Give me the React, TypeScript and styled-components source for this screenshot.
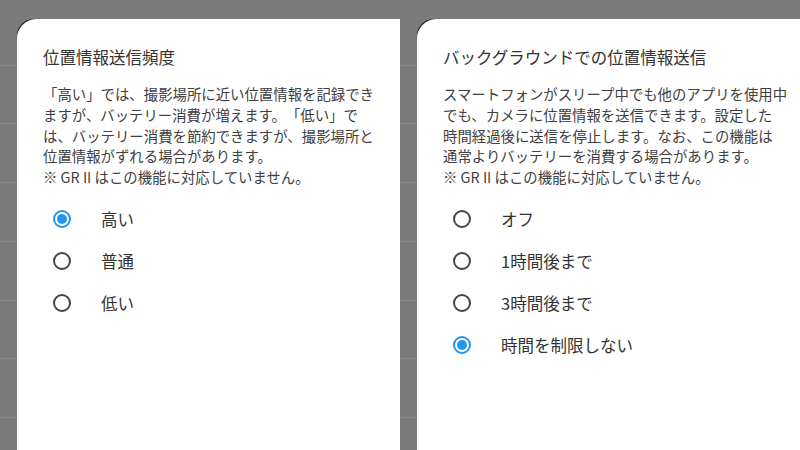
import React from 'react';
import styled, { createGlobalStyle } from 'styled-components';

interface OptionData {
  label: string;
  checked?: boolean;
}

interface DialogData {
  title: string;
  lines: string[];
  options: OptionData[];
}

const dialogs: DialogData[] = [
  {
    title: '位置情報送信頻度',
    lines: [
      '「高い」では、撮影場所に近い位置情報を記録でき',
      'ますが、バッテリー消費が増えます。「低い」で',
      'は、バッテリー消費を節約できますが、撮影場所と',
      '位置情報がずれる場合があります。',
      '※ GR II はこの機能に対応していません。'
    ],
    options: [{ label: '高い', checked: true }, { label: '普通' }, { label: '低い' }]
  },
  {
    title: 'バックグラウンドでの位置情報送信',
    lines: [
      'スマートフォンがスリープ中でも他のアプリを使用中',
      'でも、カメラに位置情報を送信できます。設定した',
      '時間経過後に送信を停止します。なお、この機能は',
      '通常よりバッテリーを消費する場合があります。',
      '※ GR II はこの機能に対応していません。'
    ],
    options: [
      { label: 'オフ' },
      { label: '1時間後まで' },
      { label: '3時間後まで' },
      { label: '時間を制限しない', checked: true }
    ]
  }
];

const GlobalStyle = createGlobalStyle`
  html, body {
    margin: 0;
    padding: 0;
    background: #7a7a7a;
  }
  body {
    font-family: "Noto Sans CJK JP", "Noto Sans", sans-serif;
    text-spacing-trim: space-all;
    font-feature-settings: "chws" 0, "halt" 0, "palt" 0;
  }
`;

const Screen = styled.div`
  display: flex;
  width: 800px;
  height: 450px;
  overflow: hidden;
`;

const Pane = styled.div`
  width: 400px;
  height: 450px;
  flex-shrink: 0;
  overflow: hidden;
  box-sizing: border-box;
  padding: 19px 0 0 17px;
  background-color: #7a7a7a;
  background-image: repeating-linear-gradient(
    to bottom,
    transparent 0 57.7px,
    #888888 57.7px 58.7px
  );
  background-position: 0 7px;
`;

const Card = styled.div`
  position: relative;
  width: 420px;
  height: 460px;
  box-sizing: border-box;
  padding: 26px 26px 0;
  background: #ffffff;
  border-radius: 20px 20px 0 0;

  &::before {
    content: '';
    position: absolute;
    top: -1px;
    left: -1px;
    width: 20px;
    height: 20px;
    border-top: 1.5px solid #1c1c1c;
    border-left: 1.5px solid #1c1c1c;
    border-top-left-radius: 20px;
    -webkit-mask-image: radial-gradient(circle at 30% 30%, #000 25%, transparent 65%);
    mask-image: radial-gradient(circle at 30% 30%, #000 25%, transparent 65%);
  }
`;

const Title = styled.h2`
  margin: 0;
  font-size: 16.5px;
  line-height: 24px;
  font-weight: 400;
  color: #333333;
  white-space: nowrap;
`;

const Body = styled.p`
  margin: 15px 0 0;
  font-size: 14.4px;
  line-height: 20.8px;
  color: #404040;
  white-space: nowrap;
`;

const OptionList = styled.div`
  display: flex;
  flex-direction: column;
  margin-top: 10px;
`;

const OptionRow = styled.label`
  display: flex;
  align-items: center;
  height: 42px;
  padding-left: 10px;
`;

const Radio = styled.span<{ $checked?: boolean }>`
  position: relative;
  width: 18px;
  height: 18px;
  box-sizing: border-box;
  border-radius: 50%;
  border: 2px solid ${p => (p.$checked ? '#2196f3' : '#444444')};
  flex-shrink: 0;

  &::after {
    content: '';
    display: ${p => (p.$checked ? 'block' : 'none')};
    position: absolute;
    top: 2px;
    left: 2px;
    width: 10px;
    height: 10px;
    border-radius: 50%;
    background: #2196f3;
  }
`;

const OptionLabel = styled.span`
  margin-left: 30px;
  font-size: 16.5px;
  line-height: 24px;
  color: #333333;
  white-space: nowrap;
`;

const Dialog: React.FC<{ data: DialogData }> = ({ data }) => (
  <Pane>
    <Card>
      <Title>{data.title}</Title>
      <Body>
        {data.lines.map((line, i) => (
          <React.Fragment key={i}>
            {line}
            {i < data.lines.length - 1 && <br />}
          </React.Fragment>
        ))}
      </Body>
      <OptionList>
        {data.options.map(opt => (
          <OptionRow key={opt.label}>
            <Radio $checked={opt.checked} />
            <OptionLabel>{opt.label}</OptionLabel>
          </OptionRow>
        ))}
      </OptionList>
    </Card>
  </Pane>
);

const App: React.FC = () => (
  <>
    <GlobalStyle />
    <Screen>
      {dialogs.map(d => (
        <Dialog key={d.title} data={d} />
      ))}
    </Screen>
  </>
);

export default App;
